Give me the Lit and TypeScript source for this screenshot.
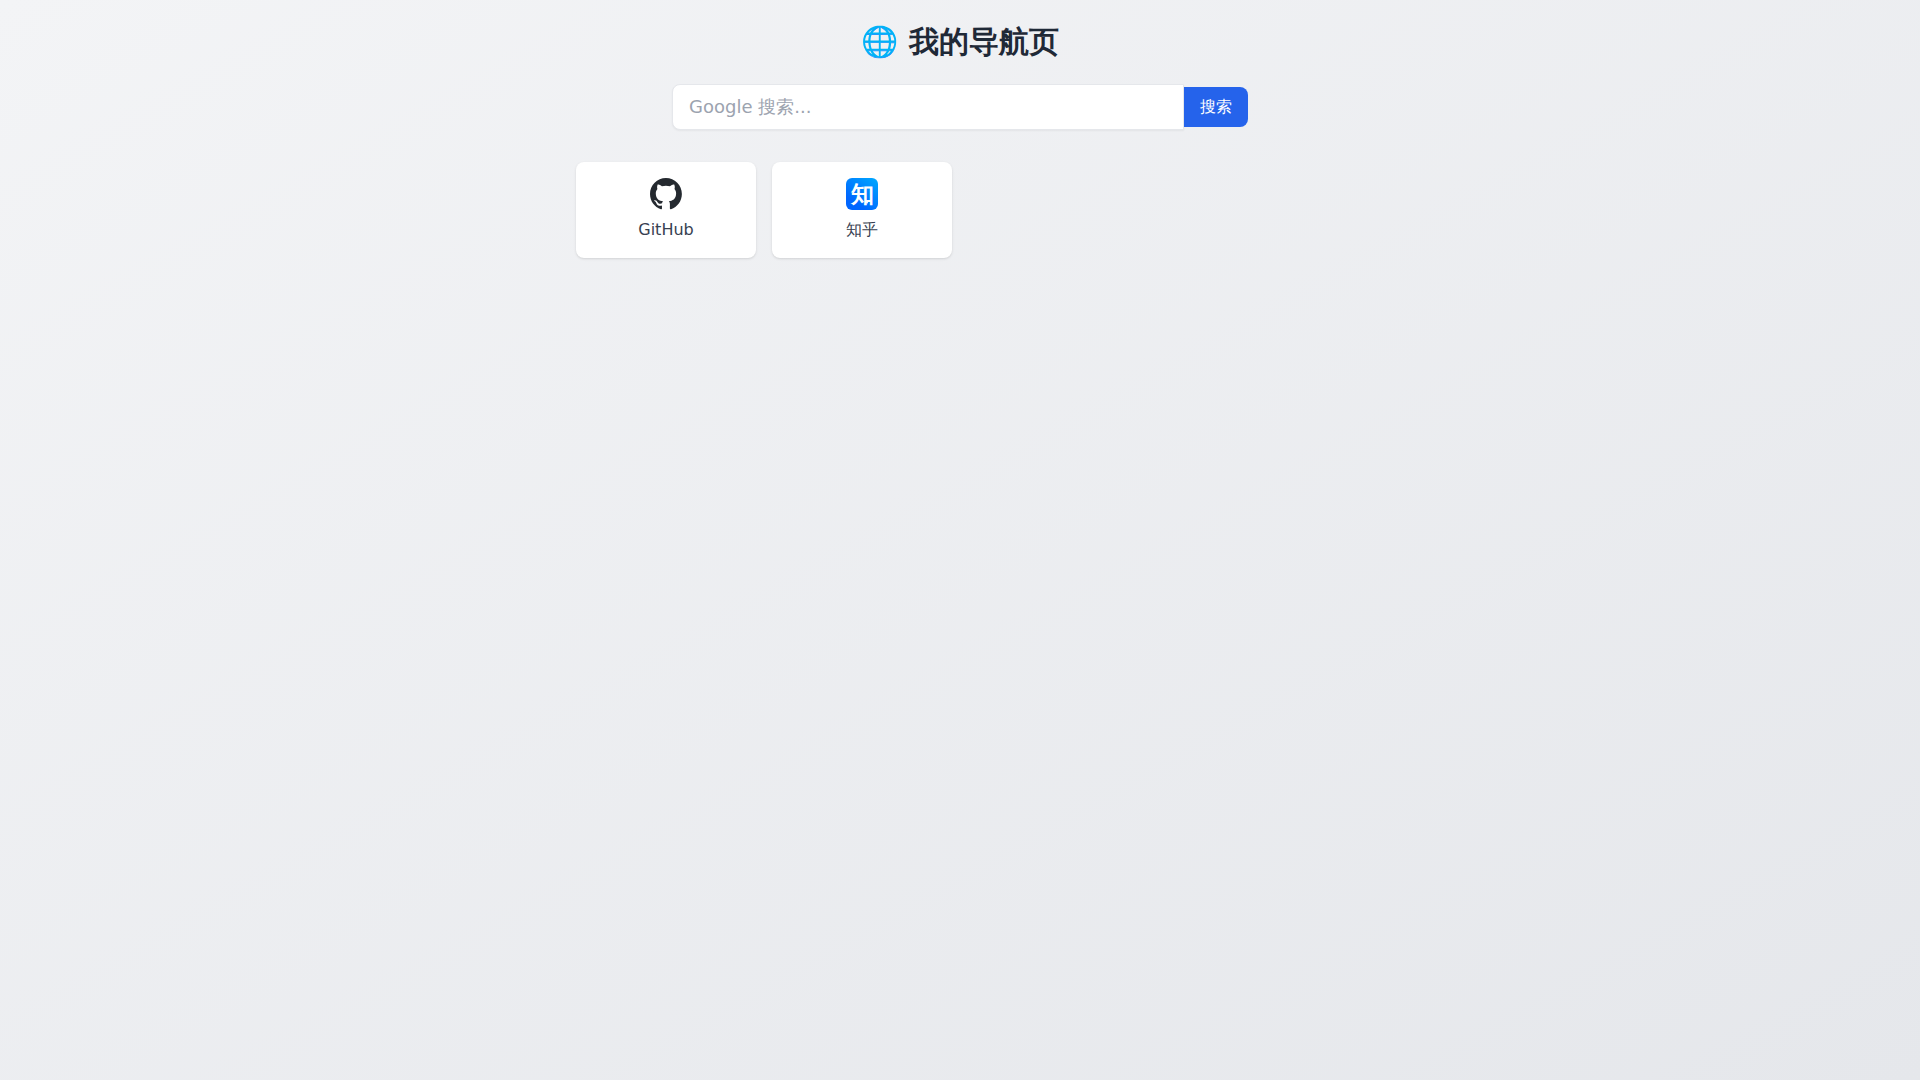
import { LitElement, html, css, svg } from "lit";
import { customElement } from "lit/decorators.js";

const githubIcon = html`<svg class="icon" viewBox="0 0 98 98" aria-hidden="true">
  <path
    fill="#24292f"
    fill-rule="evenodd"
    d="M48.854 0C21.839 0 0 22 0 49.217c0 21.756 13.993 40.172 33.405 46.69 2.427.49 3.316-1.059 3.316-2.362 0-1.141-.08-5.052-.08-9.127-13.59 2.934-16.42-5.867-16.42-5.867-2.184-5.704-5.42-7.17-5.42-7.17-4.448-3.015.324-3.015.324-3.015 4.934.326 7.523 5.052 7.523 5.052 4.367 7.496 11.404 5.378 14.235 4.074.404-3.178 1.699-5.378 3.074-6.6-10.839-1.141-22.243-5.378-22.243-24.283 0-5.378 1.94-9.778 5.014-13.2-.485-1.222-2.184-6.275.486-13.038 0 0 4.125-1.304 13.426 5.052a46.97 46.97 0 0 1 12.214-1.63c4.125 0 8.33.571 12.213 1.63 9.302-6.356 13.427-5.052 13.427-5.052 2.67 6.763.97 11.816.485 13.038 3.155 3.422 5.015 7.822 5.015 13.2 0 18.905-11.404 23.06-22.324 24.283 1.78 1.548 3.316 4.481 3.316 9.126 0 6.6-.08 11.897-.08 13.526 0 1.304.89 2.853 3.316 2.364 19.412-6.52 33.405-24.935 33.405-46.691C97.707 22 75.788 0 48.854 0z"
  />
</svg>`;

const zhihuIcon = html`<svg class="icon" viewBox="0 0 32 32" aria-hidden="true">
  ${svg`<defs>
    <linearGradient id="zhihu-fill" x1="0.3" y1="0.8" x2="0.9" y2="0">
      <stop offset="0" stop-color="#0066ff" />
      <stop offset="1" stop-color="#00a6ff" />
    </linearGradient>
  </defs>
  <rect width="32" height="32" rx="6" fill="url(#zhihu-fill)" />
  <text class="zhihu-mark" x="16" y="24" text-anchor="middle">知</text>
  <path fill="#fff" d="M19 23h4l-2 3z" />`}
</svg>`;

const sites = [
  { name: "GitHub", url: "https://github.com", icon: githubIcon },
  { name: "知乎", url: "https://www.zhihu.com", icon: zhihuIcon },
];

@customElement("app-root")
export class AppRoot extends LitElement {
  static styles = css`
    :host {
      display: block;
      box-sizing: border-box;
      min-height: 100vh;
      padding: 24px;
      background: linear-gradient(to bottom right, #f3f4f6, #e5e7eb);
      font-family: "DejaVu Sans", sans-serif;
      font-size: 16px;
      line-height: 24px;
    }
    *,
    *::before,
    *::after {
      box-sizing: border-box;
    }
    .title {
      margin: 0 0 24px;
      color: #1f2937;
      font-size: 30px;
      font-weight: 700;
      line-height: 36px;
      text-align: center;
    }
    .search {
      display: flex;
      align-items: center;
      max-width: 576px;
      margin: 0 auto 32px;
    }
    .search-input {
      flex: 1;
      min-width: 0;
      padding: 8px 16px;
      border: 1px solid #e5e7eb;
      border-radius: 8px 0 0 8px;
      background: #fff;
      box-shadow: 0 1px 2px rgba(0, 0, 0, 0.05);
      color: #1f2937;
      font-family: inherit;
      font-size: 18px;
      line-height: 28px;
      outline: none;
    }
    .search-input::placeholder {
      color: #9ca3af;
    }
    .search-button {
      padding: 8px 16px;
      border: 0;
      border-radius: 0 8px 8px 0;
      background: #2563eb;
      color: #fff;
      font: inherit;
      cursor: pointer;
    }
    .search-button:hover {
      background: #1d4ed8;
    }
    .sites {
      display: grid;
      grid-template-columns: repeat(4, minmax(0, 1fr));
      gap: 16px;
      max-width: 768px;
      margin: 0 auto;
    }
    .card {
      display: flex;
      flex-direction: column;
      align-items: center;
      gap: 8px;
      padding: 16px;
      border-radius: 8px;
      background: #fff;
      box-shadow:
        0 1px 3px rgba(0, 0, 0, 0.1),
        0 1px 2px -1px rgba(0, 0, 0, 0.1);
      color: #374151;
      text-decoration: none;
    }
    .icon {
      display: block;
      width: 32px;
      height: 32px;
      overflow: visible;
    }
    .zhihu-mark {
      fill: #fff;
      font-family: "DejaVu Sans", sans-serif;
      font-size: 23px;
      font-weight: 700;
    }
    @media (max-width: 640px) {
      .sites {
        grid-template-columns: repeat(2, minmax(0, 1fr));
      }
    }
  `;

  private search(event: Event) {
    event.preventDefault();
    const form = event.currentTarget as HTMLFormElement;
    const query = String(new FormData(form).get("q") ?? "").trim();
    if (query) {
      window.open("https://www.google.com/search?q=" + encodeURIComponent(query), "_blank");
    }
  }

  render() {
    return html`
      <main>
        <h1 class="title">🌐 我的导航页</h1>
        <form class="search" role="search" @submit=${this.search}>
          <input class="search-input" type="text" name="q" aria-label="Google 搜索" placeholder="Google 搜索..." />
          <button class="search-button" type="submit">搜索</button>
        </form>
        <nav class="sites">
          ${sites.map(
            (site) => html`<a class="card" href=${site.url} target="_blank" rel="noopener">
              ${site.icon}<span>${site.name}</span>
            </a>`,
          )}
        </nav>
      </main>
    `;
  }
}
